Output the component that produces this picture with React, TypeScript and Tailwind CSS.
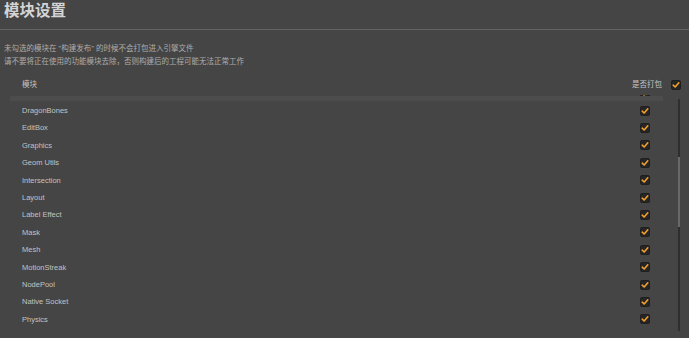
import React from "react";

const modules = [
  "Collider",
  "DragonBones",
  "EditBox",
  "Graphics",
  "Geom Utils",
  "Intersection",
  "Layout",
  "Label Effect",
  "Mask",
  "Mesh",
  "MotionStreak",
  "NodePool",
  "Native Socket",
  "Physics",
  "Particle",
];

function Check() {
  return (
    <div className="w-[10px] h-[10px] rounded-[2px] bg-[#262626] border border-[#1f1f1f] flex items-center justify-center">
      <svg width="8" height="8" viewBox="0 0 8 8">
        <path d="M1.2 4.2 L3.2 6 L6.8 1.8" fill="none" stroke="#f3a02c" strokeWidth="1.6" strokeLinecap="round" strokeLinejoin="round" />
      </svg>
    </div>
  );
}

export default function App() {
  const font = { fontFamily: '"Liberation Sans", "Noto Sans CJK SC", sans-serif' };
  return (
    <div className="w-[689px] h-[338px] bg-[#454545] overflow-hidden flex flex-col" style={font}>
      <div className="h-[29px] pl-[4px] pt-[1px] text-[15.5px] leading-[20px] font-bold text-[#d4d4d4]">模块设置</div>
      <div className="h-px bg-[#636363]" />
      <div className="mt-[12px] pl-[4px] text-[7.5px] leading-[13px] text-[#adadad]">
        <div>未勾选的模块在 "构建发布" 的时候不会打包进入引擎文件</div>
        <div>请不要将正在使用的功能模块去除，否则构建后的工程可能无法正常工作</div>
      </div>
      <div className="mt-[9px] h-[16px] flex items-center text-[7.5px] text-[#c4c4c4]">
        <div className="pl-[22px] flex-1">模块</div>
        <div className="mr-[9px]">是否打包</div>
        <div className="mr-[8px] mt-[-1px]"><Check /></div>
      </div>
      <div className="flex flex-1 min-h-0 mt-[2px]">
        <div className="relative w-[678px] h-[236px] overflow-hidden">
          <div className="mt-[-10.6px] flex flex-col">
            {modules.map((m) => (
              <div key={m} className="h-[17.42px] flex items-center">
                <div className="w-[640px] pl-[22px] text-[7.5px] text-[#c2c2c2]">{m}</div>
                <Check />
              </div>
            ))}
          </div>
          <div className="absolute top-[1px] left-[10px] w-[653px] h-[5px] bg-[#4c4c4c]" />
        </div>
        <div className="w-[2px] mt-[4px] h-[232px] bg-[#2e2e2e] flex flex-col">
          <div className="mt-[58px] h-[70px] bg-[#686868]" />
        </div>
      </div>
    </div>
  );
}
